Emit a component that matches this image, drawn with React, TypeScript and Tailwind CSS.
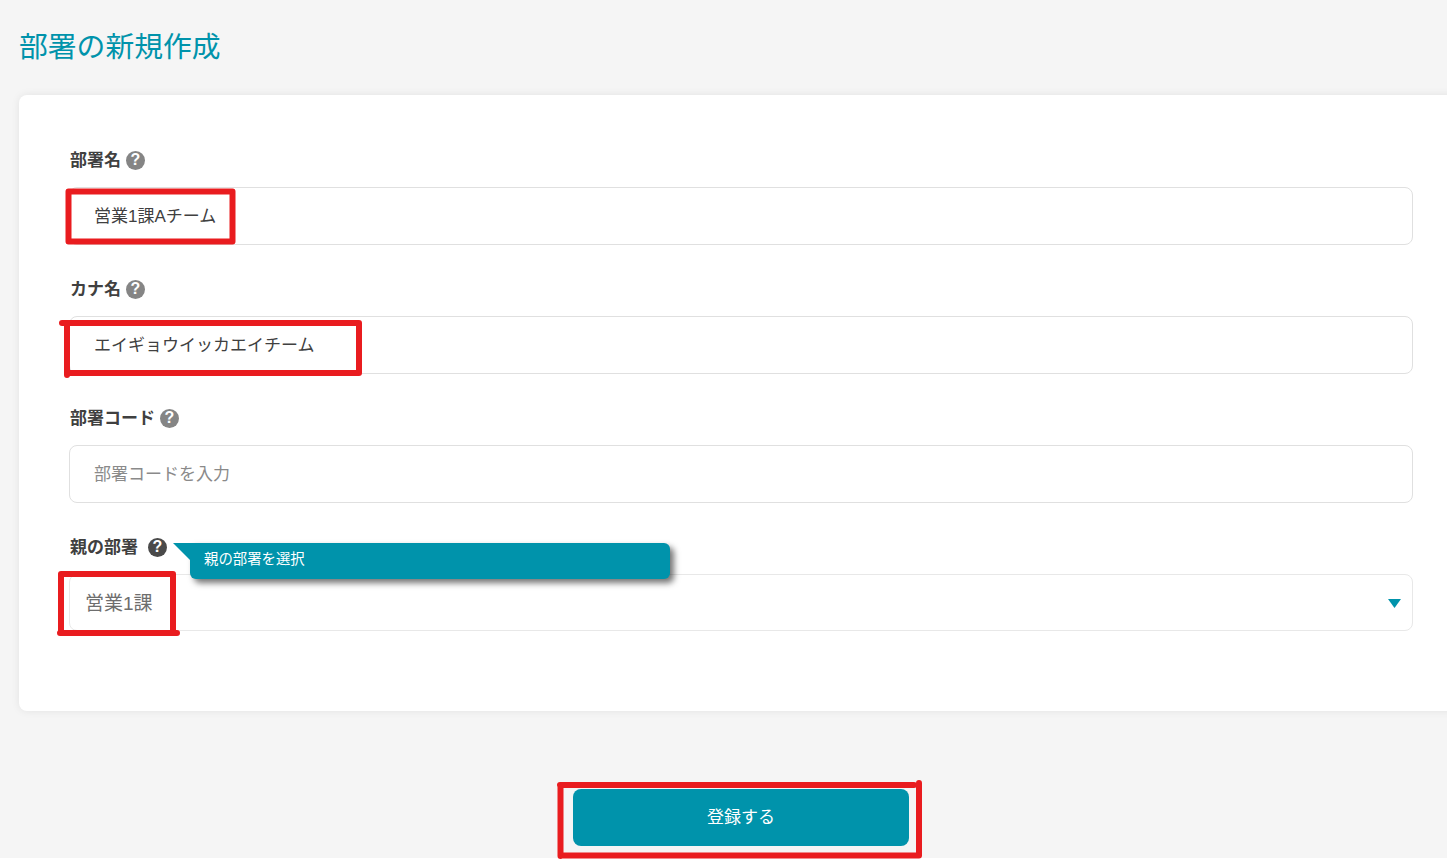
const HelpIcon = ({ dark }: { dark?: boolean }) => (
  <span
    className={`flex h-[19px] w-[19px] items-center justify-center rounded-full text-[16px] leading-none font-bold text-white ${
      dark ? "bg-[#4a4a4a]" : "bg-[#858585]"
    }`}
  >
    ?
  </span>
);

const Field = ({
  label,
  value,
  placeholder,
}: {
  label: string;
  value?: string;
  placeholder?: string;
}) => (
  <div className="mb-[32px]">
    <div className="mb-[15px] flex h-6 items-center gap-[5px] pl-px">
      <span className="pt-[2px] text-[17px] leading-6 font-bold text-[#404040]">{label}</span>
      <HelpIcon />
    </div>
    <div
      className={`flex h-[58px] items-center rounded-lg border border-[#e0e0e0] bg-white pt-[2px] pl-[24px] text-[17px] ${
        value ? "text-[#404040]" : "text-[#8a8a8a]"
      }`}
    >
      {value ?? placeholder}
    </div>
  </div>
);

const App = () => {
  return (
    <div className="h-[861px] overflow-hidden bg-white [font-family:'Liberation_Sans','Noto_Sans_CJK_JP',sans-serif]">
      <div className="relative h-[858px] overflow-hidden bg-[#f5f5f5]">
        <h1 className="pt-[26px] pl-[19px] text-[28.8px] leading-[42px] font-normal text-[#0093ab]">
          部署の新規作成
        </h1>

        <div className="mt-[27px] ml-[19px] w-[1460px] rounded-l-lg bg-white pt-[53px] pr-[66px] pb-[80px] pl-[50px] shadow-[0_0_8px_rgba(0,0,0,0.08)]">
          <div className="w-[1344px]">
            <Field label="部署名" value="営業1課Aチーム" />
            <Field label="カナ名" value="エイギョウイッカエイチーム" />
            <Field label="部署コード" placeholder="部署コードを入力" />

            <div className="relative flex h-6 items-center pl-px">
              <span className="pt-[2px] text-[17px] leading-6 font-bold text-[#404040]">親の部署</span>
              <span className="ml-[10px]">
                <HelpIcon dark />
              </span>
              <div className="absolute top-[8px] left-[121px] flex h-[36px] w-[480px] items-center rounded-r-md rounded-bl-md bg-[#0093ab] pb-[2px] pl-[14px] text-[14.4px] text-white shadow-[4px_4px_6px_rgba(0,0,0,0.55)]">
                親の部署を選択
              </div>
              <svg className="absolute top-[8px] left-[104px]" width="18" height="18" viewBox="0 0 18 18">
                <path d="M0 0h18v18z" fill="#0093ab" />
              </svg>
            </div>
            <div className="mt-[15px] flex h-[57px] items-center justify-between rounded-lg border border-[#e8e8e8] bg-white pr-[11px] pl-[15px] text-[19px] text-[#6e6e6e]">
              <span className="pt-[4px]">営業1課</span>
              <svg className="mt-[2px]" width="13" height="9" viewBox="0 0 13 9">
                <path d="M0 0h13L6.5 9z" fill="#0093ab" />
              </svg>
            </div>
          </div>
        </div>

        <div className="mt-[78px] flex justify-center pl-[35px]">
          <button className="h-[57px] w-[336px] rounded-lg bg-[#0093ab] pt-[1px] text-[17px] text-white">
            登録する
          </button>
        </div>
      </div>

      {/* hand drawn red marks on top of the screenshot */}
      <svg
        className="pointer-events-none absolute top-0 left-0"
        width="1447"
        height="861"
        viewBox="0 0 1447 861"
        fill="none"
        stroke="#e91c1f"
        strokeWidth="6"
        strokeLinecap="round"
        strokeLinejoin="round"
      >
        <path d="M68.5 191.5H232.5V241.5H68.5Z" />
        <path d="M62 323H359V373H67M67 323V375" />
        <path d="M61 574H173V633M60 633H177M61 574V633" />
        <path d="M560 785H914M919 783V855.5H561M560.5 785V856" />
      </svg>
    </div>
  );
};

export default App;
